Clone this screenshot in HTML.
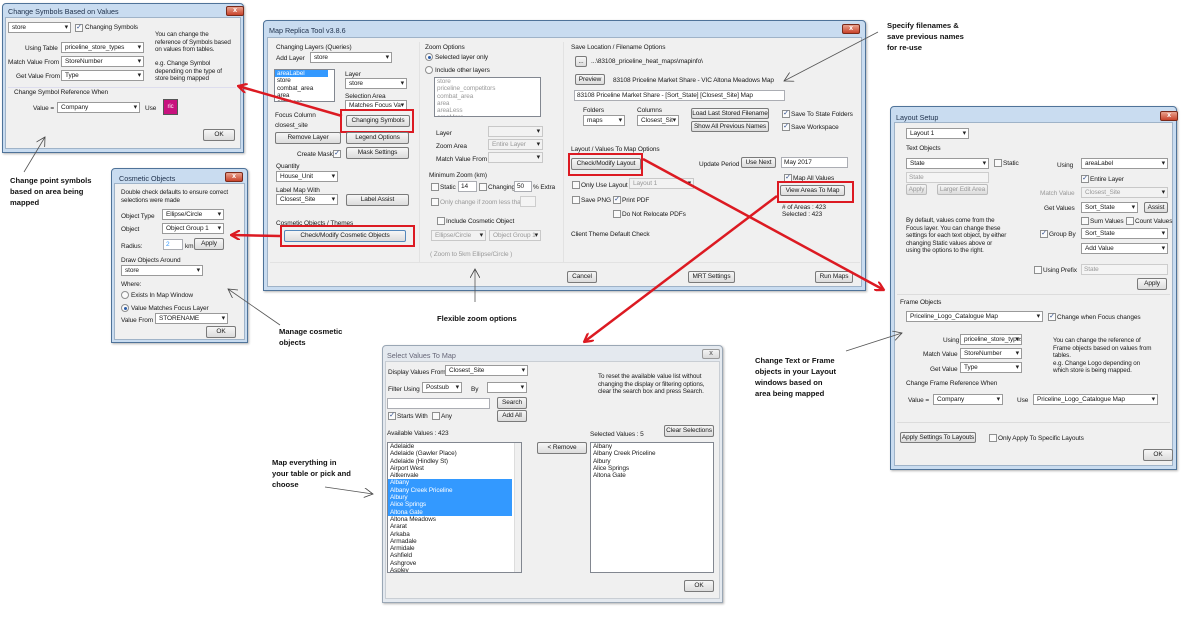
<!DOCTYPE html>
<html><head><meta charset="utf-8"><style>
*{box-sizing:border-box;margin:0;padding:0}
body{width:1200px;height:619px;background:#fff;position:relative;overflow:hidden;font-family:"Liberation Sans",sans-serif;font-size:6.5px;letter-spacing:-0.1px;color:#1a1a1a}
div,span{position:absolute}
.win{background:#c9dcf0;border:1px solid #4f7399;border-radius:4px 4px 0 0;box-shadow:1px 1px 2px rgba(0,0,0,.3)}
.win.gray{background:#e4e9ef;border-color:#9aa7b5}
.body{background:#f0f0f0;border:1px solid #9fb3c8}
.tt{font-size:7.2px;color:#1d2f4a;white-space:nowrap;letter-spacing:0}
.x{width:18px;height:10px;background:linear-gradient(#e9a38f,#c9432b);border:1px solid #7a2a1a;border-radius:2px;color:#fff;font-size:7px;text-align:center;line-height:8px;font-weight:bold}
.x.g{background:linear-gradient(#f3f3f3,#d9d9d9);border-color:#999;color:#777}
.t{white-space:nowrap;line-height:8px}
.gr{color:#9a9a9a}
.dd{height:11px;background:#fff;border:1px solid #9a9a9a;line-height:9px;padding-left:3px;white-space:nowrap;overflow:hidden}
.dd::after{content:"▾";position:absolute;right:2px;top:0;font-size:7px;color:#222}
.dd.d{background:#f2f2f2;color:#999;border-color:#c8c8c8}
.tb{height:11px;background:#fff;border:1px solid #abadb3;line-height:9px;padding-left:2px;white-space:nowrap;overflow:hidden}
.tb.d{background:#f4f4f4;color:#999;border-color:#cdcdcd}
.btn{height:12px;background:linear-gradient(#f6f6f6,#dcdcdc);border:1px solid #7a7a7a;border-radius:2px;text-align:center;line-height:10px;white-space:nowrap;overflow:hidden}
.btn.d{color:#999;border-color:#bbb}
.cb{width:8px;height:8px;border:1px solid #8e8f8f;background:#fafafa;font-size:7px;line-height:6px;text-align:center;color:#2a4a8a}
.rd{width:8px;height:8px;border:1px solid #8e8f8f;border-radius:50%;background:#fafafa}
.rd.on::after{content:"";position:absolute;left:2px;top:2px;width:3px;height:3px;border-radius:50%;background:#2a5ca8}
.lb{background:#fff;border:1px solid #828790;overflow:hidden}
.lb div{position:relative;white-space:nowrap;line-height:7.3px;padding-left:2px;font-size:6.4px}
.sel{background:#3399ff;color:#fff}
.red{border:2.5px solid #dc1a22}
.ann{font-weight:bold;font-size:7.6px;line-height:11px;white-space:nowrap;color:#111;letter-spacing:0}
.gb{border:1px solid #d5dfe5;border-radius:2px}
</style></head><body>

<!-- ============ Change Symbols ============ -->
<div class="win" style="left:2px;top:3px;width:242px;height:150px"></div>
<div class="tt" style="left:8px;top:7px">Change Symbols Based on Values</div>
<div class="x" style="left:226px;top:6px">x</div>
<div class="body" style="left:5px;top:17px;width:236px;height:132px"></div>
<div class="dd" style="left:8px;top:22px;width:63px">store</div>
<div class="cb" style="left:75px;top:24px">✓</div><div class="t" style="left:85px;top:24px">Changing Symbols</div>
<div class="t" style="left:155px;top:31px;font-size:6.3px;line-height:7.5px">You can change the<br>reference of Symbols based<br>on values from tables.</div>
<div class="t" style="left:155px;top:60px;font-size:6.3px;line-height:7.5px">e.g. Change Symbol<br>depending on the type of<br>store being mapped</div>
<div class="t" style="left:25px;top:45px">Using Table</div><div class="dd" style="left:61px;top:42px;width:83px">priceline_store_types</div>
<div class="t" style="left:8px;top:59px">Match Value From</div><div class="dd" style="left:61px;top:56px;width:83px">StoreNumber</div>
<div class="t" style="left:16px;top:73px">Get Value From</div><div class="dd" style="left:61px;top:70px;width:83px">Type</div>
<div style="left:8px;top:87px;width:228px;height:1px;background:#dde"></div>
<div class="t" style="left:14px;top:89px">Change Symbol Reference When</div>
<div class="t" style="left:33px;top:105px">Value =</div><div class="dd" style="left:57px;top:102px;width:83px">Company</div>
<div class="t" style="left:145px;top:105px">Use</div>
<div style="left:163px;top:99px;width:15px;height:16px;background:#c8127e;border:1px solid #555;color:#fff;font-size:6px;line-height:14px;text-align:center">ric</div>
<div class="btn" style="left:203px;top:129px;width:32px">OK</div>

<!-- ============ Cosmetic Objects ============ -->
<div class="win" style="left:111px;top:168px;width:137px;height:175px"></div>
<div class="tt" style="left:119px;top:174px">Cosmetic Objects</div>
<div class="x" style="left:225px;top:172px">x</div>
<div class="body" style="left:114px;top:183px;width:131px;height:157px"></div>
<div class="t" style="left:121px;top:189px;font-size:6.3px;line-height:7.5px">Double check defaults to ensure correct<br>selections were made</div>
<div class="t" style="left:121px;top:213px">Object Type</div><div class="dd" style="left:162px;top:209px;width:62px">Ellipse/Circle</div>
<div class="t" style="left:121px;top:226px">Object</div><div class="dd" style="left:162px;top:223px;width:62px">Object Group 1</div>
<div class="t" style="left:121px;top:243px">Radius:</div><div class="tb" style="left:163px;top:239px;width:20px;color:#3399ff">2</div>
<div class="t" style="left:185px;top:243px">km</div><div class="btn" style="left:194px;top:238px;width:30px">Apply</div>
<div class="t" style="left:121px;top:257px">Draw Objects Around</div><div class="dd" style="left:121px;top:265px;width:82px">store</div>
<div class="t" style="left:121px;top:281px">Where:</div>
<div class="rd" style="left:121px;top:291px"></div><div class="t" style="left:131px;top:292px">Exists In Map Window</div>
<div class="rd on" style="left:121px;top:304px"></div><div class="t" style="left:131px;top:305px">Value Matches Focus Layer</div>
<div class="t" style="left:121px;top:317px">Value From</div><div class="dd" style="left:155px;top:313px;width:73px">STORENAME</div>
<div class="btn" style="left:206px;top:326px;width:30px">OK</div>

<!-- ============ Main window ============ -->
<div class="win" style="left:263px;top:20px;width:603px;height:271px"></div>
<div class="tt" style="left:269px;top:26px">Map Replica Tool v3.8.6</div>
<div class="x" style="left:842px;top:24px">x</div>
<div class="body" style="left:267px;top:37px;width:595px;height:250px"></div>
<div style="left:419px;top:42px;width:1px;height:220px;background:#e2e2e2"></div>
<div style="left:563px;top:42px;width:1px;height:220px;background:#e2e2e2"></div>
<div style="left:270px;top:262px;width:590px;height:1px;background:#e2e2e2"></div>
<div class="t" style="left:276px;top:44px">Changing Layers (Queries)</div>
<div class="t" style="left:276px;top:55px">Add Layer</div><div class="dd" style="left:310px;top:52px;width:82px">store</div>
<div class="lb" style="left:274px;top:69px;width:61px;height:33px"><div class="sel" style="width:53px">areaLabel</div><div>store</div><div>combat_area</div><div>area</div><div>areaLess</div></div>
<div class="t" style="left:345px;top:71px">Layer</div><div class="dd" style="left:345px;top:78px;width:62px">store</div>
<div class="t" style="left:345px;top:93px">Selection Area</div><div class="dd" style="left:345px;top:100px;width:62px">Matches Focus Va</div>
<div class="t" style="left:275px;top:112px">Focus Column</div><div class="t" style="left:275px;top:122px">closest_site</div>
<div class="btn" style="left:346px;top:115px;width:64px">Changing Symbols</div>
<div class="red" style="left:340px;top:109px;width:74px;height:24px"></div>
<div class="btn" style="left:275px;top:132px;width:66px">Remove Layer</div>
<div class="btn" style="left:346px;top:132px;width:63px">Legend Options</div>
<div class="t" style="left:297px;top:151px">Create Mask</div><div class="cb" style="left:333px;top:150px">✓</div>
<div class="btn" style="left:346px;top:147px;width:63px">Mask Settings</div>
<div class="t" style="left:276px;top:163px">Quantity</div><div class="dd" style="left:276px;top:171px;width:62px">House_Unit</div>
<div class="t" style="left:276px;top:187px">Label Map With</div><div class="dd" style="left:276px;top:194px;width:62px">Closest_Site</div>
<div class="btn" style="left:346px;top:194px;width:63px">Label Assist</div>
<div class="t" style="left:276px;top:220px">Cosmetic Objects / Themes</div>
<div class="btn" style="left:284px;top:230px;width:122px;border-color:#5588bb">Check/Modify Cosmetic Objects</div>
<div class="red" style="left:280px;top:225px;width:135px;height:22px"></div>

<div class="t" style="left:425px;top:44px">Zoom Options</div>
<div class="rd on" style="left:425px;top:53px"></div><div class="t" style="left:435px;top:54px">Selected layer only</div>
<div class="rd" style="left:425px;top:66px"></div><div class="t" style="left:435px;top:67px">Include other layers</div>
<div class="lb" style="left:434px;top:77px;width:107px;height:40px;color:#999"><div>store</div><div>priceline_competitors</div><div>combat_area</div><div>area</div><div>areaLess</div><div>areaMore</div></div>
<div class="t" style="left:436px;top:130px">Layer</div><div class="dd d" style="left:488px;top:126px;width:55px"></div>
<div class="t" style="left:436px;top:143px">Zoom Area</div><div class="dd d" style="left:488px;top:139px;width:55px">Entire Layer</div>
<div class="t" style="left:436px;top:156px">Match Value From</div><div class="dd d" style="left:488px;top:152px;width:55px"></div>
<div class="t" style="left:429px;top:172px">Minimum Zoom (km)</div>
<div class="cb" style="left:431px;top:183px"></div><div class="t" style="left:440px;top:184px">Static</div><div class="tb" style="left:458px;top:181px;width:19px">14</div>
<div class="cb" style="left:479px;top:183px"></div><div class="t" style="left:488px;top:184px">Changing</div><div class="tb" style="left:514px;top:181px;width:18px">50</div><div class="t" style="left:533px;top:184px">% Extra</div>
<div class="cb" style="left:431px;top:198px"></div><div class="t gr" style="left:440px;top:199px">Only change if zoom less than</div><div class="tb d" style="left:520px;top:196px;width:16px"></div>
<div class="cb" style="left:437px;top:217px"></div><div class="t" style="left:446px;top:218px">Include Cosmetic Object</div>
<div class="dd d" style="left:431px;top:230px;width:55px">Ellipse/Circle</div>
<div class="dd d" style="left:489px;top:230px;width:52px">Object Group 1</div>
<div class="t gr" style="left:430px;top:251px">( Zoom to 5km Ellipse/Circle )</div>

<div class="t" style="left:571px;top:44px">Save Location / Filename Options</div>
<div class="btn" style="left:575px;top:56px;width:12px;height:11px">...</div>
<div class="t" style="left:591px;top:58px">...\83108_priceline_heat_maps\mapinfo\</div>
<div class="btn" style="left:575px;top:74px;width:30px;height:11px">Preview</div>
<div class="t" style="left:613px;top:77px">83108 Priceline Market Share - VIC Altona Meadows Map</div>
<div class="tb" style="left:574px;top:90px;width:211px">83108 Priceline Market Share - [Sort_State] [Closest_Site] Map</div>
<div class="t" style="left:583px;top:107px">Folders</div><div class="t" style="left:637px;top:107px">Columns</div>
<div class="dd" style="left:583px;top:115px;width:42px">maps</div><div class="dd" style="left:637px;top:115px;width:42px">Closest_Sit</div>
<div class="btn" style="left:691px;top:108px;width:78px;height:11px">Load Last Stored Filename</div>
<div class="btn" style="left:691px;top:121px;width:78px;height:11px">Show All Previous Names</div>
<div class="cb" style="left:782px;top:110px">✓</div><div class="t" style="left:791px;top:111px">Save To State Folders</div>
<div class="cb" style="left:782px;top:123px">✓</div><div class="t" style="left:791px;top:124px">Save Workspace</div>
<div class="t" style="left:571px;top:146px">Layout / Values To Map Options</div>
<div class="btn" style="left:571px;top:158px;width:70px">Check/Modify Layout</div>
<div class="red" style="left:568px;top:153px;width:75px;height:23px"></div>
<div class="t" style="left:699px;top:161px">Update Period</div>
<div class="btn" style="left:741px;top:157px;width:35px;height:11px">Use Next</div>
<div class="tb" style="left:781px;top:157px;width:67px">May 2017</div>
<div class="cb" style="left:784px;top:174px">✓</div><div class="t" style="left:793px;top:175px">Map All Values</div>
<div class="cb" style="left:572px;top:181px"></div><div class="t" style="left:581px;top:182px">Only Use Layout</div>
<div class="dd d" style="left:629px;top:178px;width:65px">Layout 1</div>
<div class="btn" style="left:780px;top:185px;width:65px;height:11px">View Areas To Map</div>
<div class="red" style="left:777px;top:181px;width:77px;height:22px"></div>
<div class="cb" style="left:572px;top:196px"></div><div class="t" style="left:581px;top:197px">Save PNG</div>
<div class="cb" style="left:613px;top:196px">✓</div><div class="t" style="left:622px;top:197px">Print PDF</div>
<div class="cb" style="left:613px;top:210px"></div><div class="t" style="left:622px;top:211px">Do Not Relocate PDFs</div>
<div class="t" style="left:782px;top:204px">&#35; of Areas : 423</div><div class="t" style="left:782px;top:211px">Selected : 423</div>
<div class="t" style="left:571px;top:231px">Client Theme Default Check</div>
<div class="btn" style="left:567px;top:271px;width:30px">Cancel</div>
<div class="btn" style="left:688px;top:271px;width:47px">MRT Settings</div>
<div class="btn" style="left:815px;top:271px;width:38px">Run Maps</div>

<!-- ============ Layout Setup ============ -->
<div class="win" style="left:890px;top:106px;width:287px;height:364px"></div>
<div class="tt" style="left:896px;top:113px">Layout Setup</div>
<div class="x" style="left:1160px;top:111px">x</div>
<div class="body" style="left:894px;top:122px;width:279px;height:344px"></div>
<div class="dd" style="left:906px;top:128px;width:63px">Layout 1</div>
<div class="t" style="left:906px;top:145px">Text Objects</div>
<div class="dd" style="left:906px;top:158px;width:83px">State</div>
<div class="cb" style="left:994px;top:159px"></div><div class="t" style="left:1003px;top:160px">Static</div>
<div class="tb d" style="left:906px;top:172px;width:83px">State</div>
<div class="btn d" style="left:906px;top:184px;width:21px;height:11px">Apply</div>
<div class="btn d" style="left:937px;top:184px;width:51px;height:11px">Larger Edit Area</div>
<div class="t" style="left:1057px;top:162px">Using</div><div class="dd" style="left:1081px;top:158px;width:87px">areaLabel</div>
<div class="cb" style="left:1081px;top:175px">✓</div><div class="t" style="left:1090px;top:176px">Entire Layer</div>
<div class="t gr" style="left:1040px;top:190px">Match Value</div><div class="dd d" style="left:1081px;top:187px;width:87px">Closest_Site</div>
<div class="t" style="left:1044px;top:205px">Get Values</div><div class="dd" style="left:1081px;top:202px;width:57px">Sort_State</div>
<div class="btn" style="left:1144px;top:202px;width:24px;height:11px">Assist</div>
<div class="cb" style="left:1081px;top:217px"></div><div class="t" style="left:1090px;top:218px">Sum Values</div>
<div class="cb" style="left:1126px;top:217px"></div><div class="t" style="left:1135px;top:218px">Count Values</div>
<div class="cb" style="left:1040px;top:230px">✓</div><div class="t" style="left:1049px;top:231px">Group By</div>
<div class="dd" style="left:1081px;top:228px;width:87px">Sort_State</div>
<div class="dd" style="left:1081px;top:243px;width:87px">Add Value</div>
<div class="t" style="left:906px;top:217px;font-size:6.3px;line-height:7.5px">By default, values come from the<br>Focus layer. You can change these<br>settings for each text object, by either<br>changing Static values above or<br>using the options to the right.</div>
<div class="cb" style="left:1034px;top:266px"></div><div class="t" style="left:1043px;top:267px">Using Prefix</div>
<div class="tb d" style="left:1081px;top:264px;width:87px">State</div>
<div class="btn" style="left:1137px;top:278px;width:30px">Apply</div>
<div style="left:897px;top:294px;width:273px;height:1px;background:#dcdcdc"></div>
<div class="t" style="left:900px;top:299px">Frame Objects</div>
<div class="dd" style="left:906px;top:311px;width:137px">Priceline_Logo_Catalogue Map</div>
<div class="cb" style="left:1048px;top:313px">✓</div><div class="t" style="left:1057px;top:314px">Change when Focus changes</div>
<div class="t" style="left:943px;top:337px">Using</div><div class="dd" style="left:960px;top:334px;width:62px">priceline_store_types</div>
<div class="t" style="left:923px;top:351px">Match Value</div><div class="dd" style="left:960px;top:348px;width:62px">StoreNumber</div>
<div class="t" style="left:930px;top:366px">Get Value</div><div class="dd" style="left:960px;top:362px;width:62px">Type</div>
<div class="t" style="left:1053px;top:337px;font-size:6.3px;line-height:7.5px">You can change the reference of<br>Frame objects based on values from<br>tables.<br>e.g. Change Logo depending on<br>which store is being mapped.</div>
<div class="t" style="left:906px;top:380px">Change Frame Reference When</div>
<div class="t" style="left:908px;top:397px">Value =</div><div class="dd" style="left:933px;top:394px;width:70px">Company</div>
<div class="t" style="left:1017px;top:397px">Use</div><div class="dd" style="left:1033px;top:394px;width:125px">Priceline_Logo_Catalogue Map</div>
<div style="left:897px;top:422px;width:273px;height:1px;background:#dcdcdc"></div>
<div class="btn" style="left:900px;top:432px;width:76px;height:11px">Apply Settings To Layouts</div>
<div class="cb" style="left:989px;top:434px"></div><div class="t" style="left:998px;top:435px">Only Apply To Specific Layouts</div>
<div class="btn" style="left:1143px;top:449px;width:30px">OK</div>

<!-- ============ Select Values ============ -->
<div class="win gray" style="left:382px;top:345px;width:341px;height:258px"></div>
<div class="tt" style="left:387px;top:351px;color:#667">Select Values To Map</div>
<div class="x g" style="left:702px;top:349px">x</div>
<div class="body" style="left:385px;top:361px;width:335px;height:238px;border-color:#c9ced4"></div>
<div class="t" style="left:388px;top:369px">Display Values From</div><div class="dd" style="left:445px;top:365px;width:83px">Closest_Site</div>
<div class="t" style="left:388px;top:386px">Filter Using</div><div class="dd" style="left:422px;top:382px;width:40px">Postsub</div>
<div class="t" style="left:471px;top:386px">By</div><div class="dd" style="left:487px;top:382px;width:40px"></div>
<div class="tb" style="left:387px;top:398px;width:103px"></div>
<div class="btn" style="left:497px;top:397px;width:30px">Search</div>
<div class="cb" style="left:388px;top:412px">✓</div><div class="t" style="left:397px;top:413px">Starts With</div>
<div class="cb" style="left:432px;top:412px"></div><div class="t" style="left:441px;top:413px">Any</div>
<div class="btn" style="left:497px;top:410px;width:30px">Add All</div>
<div class="t" style="left:598px;top:373px;font-size:6.3px;line-height:7.5px">To reset the available value list without<br>changing the display or filtering options,<br>clear the search box and press Search.</div>
<div class="t" style="left:387px;top:430px">Available Values : 423</div>
<div class="t" style="left:590px;top:431px">Selected Values : 5</div>
<div class="btn" style="left:664px;top:425px;width:50px">Clear Selections</div>
<div class="lb" style="left:387px;top:442px;width:135px;height:131px"><div>Adelaide</div><div>Adelaide (Gawler Place)</div><div>Adelaide (Hindley St)</div><div>Airport West</div><div>Aitkenvale</div><div class="sel" style="width:124px">Albany</div><div class="sel" style="width:124px">Albany Creek Priceline</div><div class="sel" style="width:124px">Albury</div><div class="sel" style="width:124px">Alice Springs</div><div class="sel" style="width:124px">Altona Gate</div><div>Altona Meadows</div><div>Ararat</div><div>Arkaba</div><div>Armadale</div><div>Armidale</div><div>Ashfield</div><div>Ashgrove</div><div>Aspley</div><div>Australia Fair</div></div>
<div style="left:514px;top:443px;width:7px;height:129px;background:#f0f0f0;border-left:1px solid #ddd"></div>
<div class="btn" style="left:537px;top:442px;width:50px">&lt; Remove</div>
<div class="lb" style="left:590px;top:442px;width:124px;height:131px"><div>Albany</div><div>Albany Creek Priceline</div><div>Albury</div><div>Alice Springs</div><div>Altona Gate</div></div>
<div class="btn" style="left:684px;top:580px;width:30px">OK</div>

<!-- ============ Annotations ============ -->
<div class="ann" style="left:887px;top:20px">Specify filenames &amp;<br>save previous names<br>for re-use</div>
<div class="ann" style="left:437px;top:313px">Flexible zoom options</div>
<div class="ann" style="left:279px;top:326px">Manage cosmetic<br>objects</div>
<div class="ann" style="left:10px;top:175px">Change point symbols<br>based on area being<br>mapped</div>
<div class="ann" style="left:272px;top:457px">Map everything in<br>your table or pick and<br>choose</div>
<div class="ann" style="left:755px;top:355px">Change Text or Frame<br>objects in your Layout<br>windows based on<br>area being mapped</div>

<svg style="position:absolute;left:0;top:0" width="1200" height="619">
<defs>
<marker id="ar" markerWidth="10" markerHeight="10" refX="9" refY="5" orient="auto" markerUnits="userSpaceOnUse"><path d="M0,0 L9,5 L0,10" fill="none" stroke="#dc1a22" stroke-width="2.2"/></marker>
<marker id="ab" markerWidth="10" markerHeight="10" refX="9" refY="5" orient="auto" markerUnits="userSpaceOnUse"><path d="M0,0 L9,5 L0,10" fill="none" stroke="#444" stroke-width="0.8"/></marker>
</defs>
<g stroke="#dc1a22" stroke-width="2.5" fill="none">
<line x1="342" y1="116" x2="238" y2="86" marker-end="url(#ar)"/>
<line x1="280" y1="236" x2="231" y2="235" marker-end="url(#ar)"/>
<line x1="643" y1="159" x2="884" y2="290" marker-end="url(#ar)"/>
<line x1="777" y1="196" x2="584" y2="342" marker-end="url(#ar)"/>
</g>
<g stroke="#555" stroke-width="0.8" fill="none">
<line x1="878" y1="32" x2="784" y2="81" marker-end="url(#ab)"/>
<line x1="475" y1="302" x2="475" y2="269" marker-end="url(#ab)"/>
<line x1="280" y1="325" x2="228" y2="289" marker-end="url(#ab)"/>
<line x1="24" y1="172" x2="45" y2="137" marker-end="url(#ab)"/>
<line x1="325" y1="487" x2="373" y2="494" marker-end="url(#ab)"/>
<line x1="846" y1="351" x2="902" y2="333" marker-end="url(#ab)"/>
</g>
</svg>
</body></html>
